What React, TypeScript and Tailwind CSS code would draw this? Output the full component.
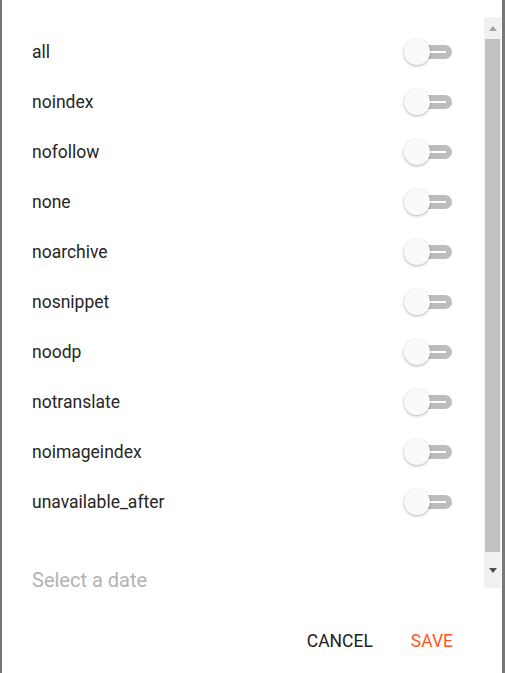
import { useState } from "react";

const directives = [
  "all",
  "noindex",
  "nofollow",
  "none",
  "noarchive",
  "nosnippet",
  "noodp",
  "notranslate",
  "noimageindex",
  "unavailable_after",
];

const Toggle = ({ on, onClick }: { on: boolean; onClick: () => void }) => (
  <button onClick={onClick} className="relative w-[50px] h-[26px] flex items-center">
    {/* track */}
    <span className="absolute left-[3px] right-[2px] h-[14px] rounded-full bg-[#bdbdbd]" />
    <span className="absolute left-[20px] right-[8px] h-[2px] bg-white" />
    {/* thumb */}
    <span
      className={`absolute top-0 w-[26px] h-[26px] rounded-full bg-[#fafafa] shadow-[0_1px_3px_rgba(0,0,0,0.3)] ${
        on ? "left-[24px]" : "left-0"
      }`}
    />
  </button>
);

const App = () => {
  const [checked, setChecked] = useState<Record<string, boolean>>({});

  return (
    <div
      className="w-[505px] h-[673px] bg-white border-l-2 border-r-[3px] border-[#777777] flex flex-col"
      style={{ fontFamily: "Roboto, 'Liberation Sans', sans-serif" }}
    >
      {/* Scroll area */}
      <div className="mt-[17px] h-[571px] flex">
        <div className="flex-1 pt-[10px] pl-[30px] pr-[30px]">
          {directives.map((d) => (
            <div key={d} className="h-[50px] flex items-center justify-between">
              <span className="text-[17.5px] text-[#262626]">{d}</span>
              <Toggle
                on={!!checked[d]}
                onClick={() => setChecked({ ...checked, [d]: !checked[d] })}
              />
            </div>
          ))}
          <div className="mt-[38px] text-[20px] leading-[30px] text-[#b3b3b3]">Select a date</div>
        </div>

        {/* Scrollbar */}
        <div className="w-[17px] mr-[1px] bg-[#f1f1f1] flex flex-col">
          <div className="h-[22px] flex items-center justify-center">
            <svg width="8" height="5" viewBox="0 0 8 5">
              <path d="M0 5 L4 0 L8 5 Z" fill="#a3a3a3" />
            </svg>
          </div>
          <div className="h-[513px] mx-[1px] bg-[#c1c1c1]" />
          <div className="flex-1 flex items-center justify-center">
            <svg width="8" height="5" viewBox="0 0 8 5">
              <path d="M0 0 L8 0 L4 5 Z" fill="#505050" />
            </svg>
          </div>
        </div>
      </div>

      {/* Actions */}
      <div className="flex-1 flex items-center justify-end gap-[38px] pr-[49px] pt-[22px]">
        <button className="text-[17.5px] text-[#212121] uppercase">Cancel</button>
        <button className="text-[17.5px] text-[#ff5722] uppercase">Save</button>
      </div>
    </div>
  );
};

export default App;
